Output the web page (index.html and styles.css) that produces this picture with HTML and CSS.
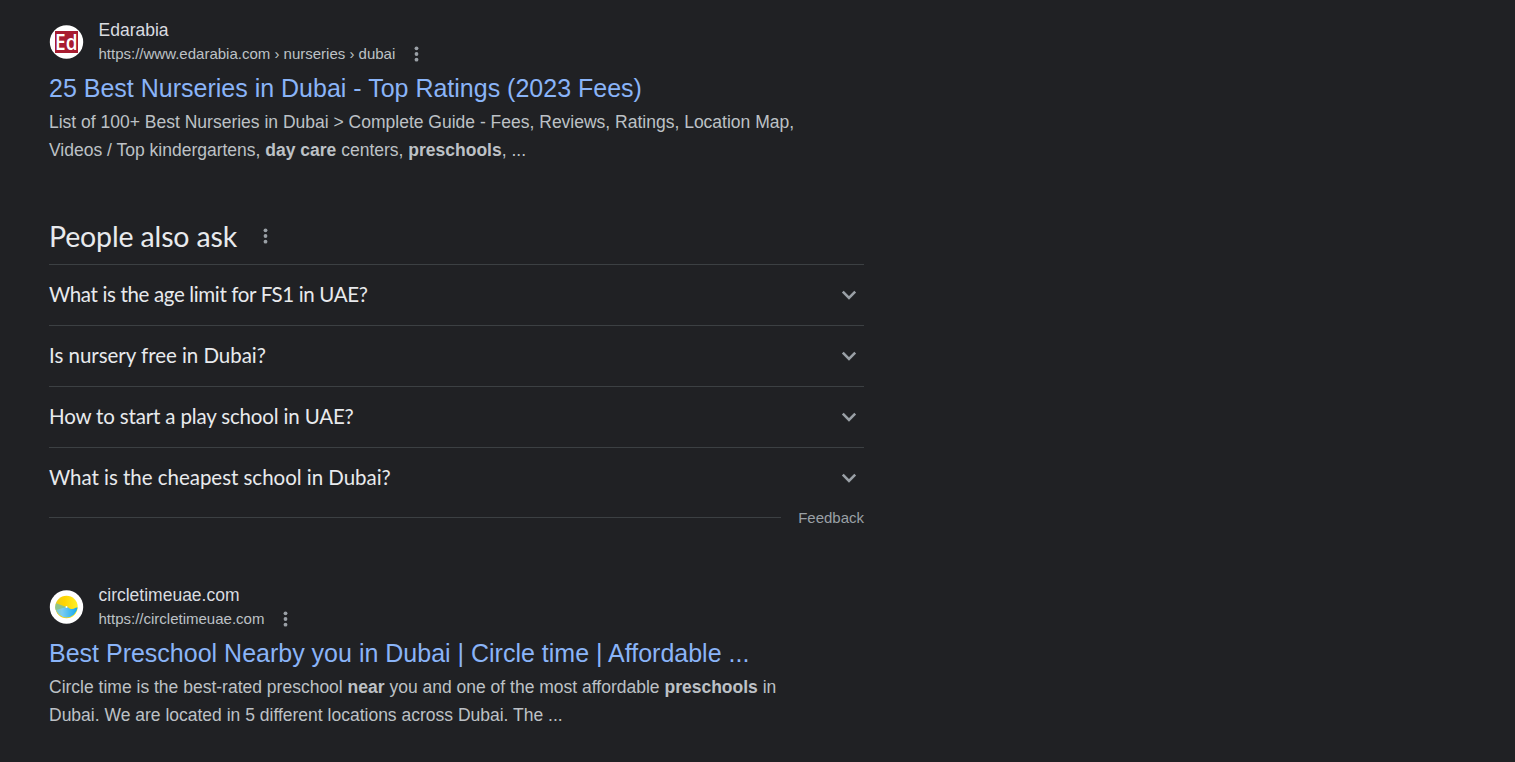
FILE: index.html
```html
<!DOCTYPE html>
<html lang="en">
<head>
    <meta charset="UTF-8">
    <meta name="viewport" content="width=device-width, initial-scale=1.0">
    <title>Search Results</title>
    <link rel="stylesheet" href="styles.css">
</head>
<body>

    <main class="results">
        <div class="result">
            <div class="result-header">
                <svg class="favicon" viewBox="0 0 35 34">
                    <circle cx="17.5" cy="17" r="16.7" fill="#fff"/>
                    <rect x="6" y="6" width="23" height="22" fill="#a81c30"/>
                    <text class="favicon-text" x="6" y="24.6" textLength="22.5" lengthAdjust="spacingAndGlyphs">Ed</text>
                </svg>
                <div class="site">
                    <div class="site-name">Edarabia</div>
                    <div class="site-url">
                        <span>https://www.edarabia.com › nurseries › dubai</span>
                        <svg class="dots" viewBox="0 0 5 16"><circle cx="2.5" cy="2.3" r="1.9"/><circle cx="2.5" cy="8" r="1.9"/><circle cx="2.5" cy="13.7" r="1.9"/></svg>
                    </div>
                </div>
            </div>
            <h3 class="title">25 Best Nurseries in Dubai - Top Ratings (2023 Fees)</h3>
            <p class="snippet">List of 100+ Best Nurseries in Dubai &gt; Complete Guide - Fees, Reviews, Ratings, Location Map,<br>Videos / Top kindergartens, <b>day care</b> centers, <b>preschools</b>, ...</p>
        </div>

        <div class="also-ask">
            <div class="ask-header">
                <h2>People also ask</h2>
                <svg class="dots" viewBox="0 0 5 16"><circle cx="2.5" cy="2.3" r="1.9"/><circle cx="2.5" cy="8" r="1.9"/><circle cx="2.5" cy="13.7" r="1.9"/></svg>
            </div>
            <div class="question">
                <span class="question-text tighter">What is the age limit for FS1 in UAE?</span>
                <svg class="chevron" viewBox="0 0 16 10"><path d="M1.8 1.6 8 7.8l6.2-6.2"/></svg>
            </div>
            <div class="question">
                <span class="question-text">Is nursery free in Dubai?</span>
                <svg class="chevron" viewBox="0 0 16 10"><path d="M1.8 1.6 8 7.8l6.2-6.2"/></svg>
            </div>
            <div class="question">
                <span class="question-text tight">How to start a play school in UAE?</span>
                <svg class="chevron" viewBox="0 0 16 10"><path d="M1.8 1.6 8 7.8l6.2-6.2"/></svg>
            </div>
            <div class="question">
                <span class="question-text">What is the cheapest school in Dubai?</span>
                <svg class="chevron" viewBox="0 0 16 10"><path d="M1.8 1.6 8 7.8l6.2-6.2"/></svg>
            </div>
            <div class="feedback">
                <div class="feedback-line"></div>
                <span>Feedback</span>
            </div>
        </div>

        <div class="result">
            <div class="result-header">
                <svg class="favicon" viewBox="0 0 35 34">
                    <defs>
                        <linearGradient id="sun" x1="0" y1="0" x2="1" y2="0">
                            <stop offset="0" stop-color="#e8cc20"/>
                            <stop offset="0.4" stop-color="#ffd400"/>
                            <stop offset="1" stop-color="#fff02a"/>
                        </linearGradient>
                        <linearGradient id="sea" x1="0" y1="0" x2="1" y2="0">
                            <stop offset="0" stop-color="#7cc8c0"/>
                            <stop offset="0.3" stop-color="#7cccf0"/>
                            <stop offset="1" stop-color="#10a8f0"/>
                        </linearGradient>
                    </defs>
                    <circle cx="17.5" cy="17" r="16.7" fill="#fff"/>
                    <circle cx="17.5" cy="17" r="11.2" fill="url(#sun)"/>
                    <path d="M6.3 17H17.5C20 17 20 19.3 23 19c3 0 3-2 5.6-1.5A11.2 11.2 0 0 1 6.3 17z" fill="url(#sea)"/>
                    <path d="M7 13.2 17.5 17 6.7 20A11.2 11.2 0 0 1 7 13.2z" fill="#8cc48c"/>
                    <circle cx="17.5" cy="17" r="1" fill="#fff"/>
                </svg>
                <div class="site">
                    <div class="site-name">circletimeuae.com</div>
                    <div class="site-url">
                        <span>https://circletimeuae.com</span>
                        <svg class="dots" viewBox="0 0 5 16"><circle cx="2.5" cy="2.3" r="1.9"/><circle cx="2.5" cy="8" r="1.9"/><circle cx="2.5" cy="13.7" r="1.9"/></svg>
                    </div>
                </div>
            </div>
            <h3 class="title">Best Preschool Nearby you in Dubai | Circle time | Affordable ...</h3>
            <p class="snippet">Circle time is the best-rated preschool <b>near</b> you and one of the most affordable <b>preschools</b> in<br>Dubai. We are located in 5 different locations across Dubai. The ...</p>
        </div>
    </main>

</body>
</html>
```
FILE: styles.css
```css
body {
    font-family: "Liberation Sans", Arial, sans-serif;
    background-color: #202124;
    color: #bdc1c6;
    margin: 0;
    overflow: hidden;
}

.results {
    width: 815px;
    padding: 18px 0 0 49px;
}

.result {
    height: 194px;
}

.result-header {
    display: flex;
    align-items: center;
    gap: 14.5px;
    height: 48px;
}

.favicon {
    width: 35px;
    height: 34px;
}

.favicon-text {
    font-family: "Open Sans", sans-serif;
    font-size: 21px;
    font-weight: 600;
    fill: #fff;
}

.site-name {
    font-size: 17.5px;
    line-height: 24px;
    color: #dadce0;
}

.site-url {
    display: flex;
    align-items: center;
    gap: 18.4px;
    font-size: 15px;
    line-height: 24px;
}

.dots {
    width: 5px;
    height: 16px;
    fill: #9aa0a6;
}

.title {
    margin: 6px 0 3px;
    font-size: 25px;
    font-weight: normal;
    line-height: 33px;
    color: #8ab4f8;
    white-space: nowrap;
}

.snippet {
    margin: 0;
    font-size: 17.5px;
    line-height: 28px;
    white-space: nowrap;
}

.also-ask {
    height: 371px;
    font-family: Lato, sans-serif;
    color: #e8eaed;
}

.ask-header {
    display: flex;
    align-items: center;
    gap: 26px;
    height: 48px;
    padding-bottom: 4px;
}

.ask-header h2 {
    margin: 0;
    font-size: 28.5px;
    font-weight: normal;
    line-height: 36px;
    letter-spacing: -0.15px;
}

.question {
    display: flex;
    align-items: center;
    justify-content: space-between;
    height: 60px;
    padding-right: 7px;
    border-top: 1px solid #3c4043;
}

.question-text {
    padding-bottom: 2px;
    font-size: 20.5px;
    letter-spacing: -0.03px;
}

.tight {
    letter-spacing: -0.16px;
}

.tighter {
    letter-spacing: -0.35px;
}

.chevron {
    width: 16px;
    height: 10px;
    fill: none;
    stroke: #9aa0a6;
    stroke-width: 2.6;
}

.feedback {
    display: flex;
    align-items: center;
    gap: 17px;
    height: 18px;
    font-family: "Liberation Sans", Arial, sans-serif;
    font-size: 15px;
    color: #9aa0a6;
}

.feedback-line {
    flex: 1;
    height: 1px;
    background-color: #3c4043;
}
```
